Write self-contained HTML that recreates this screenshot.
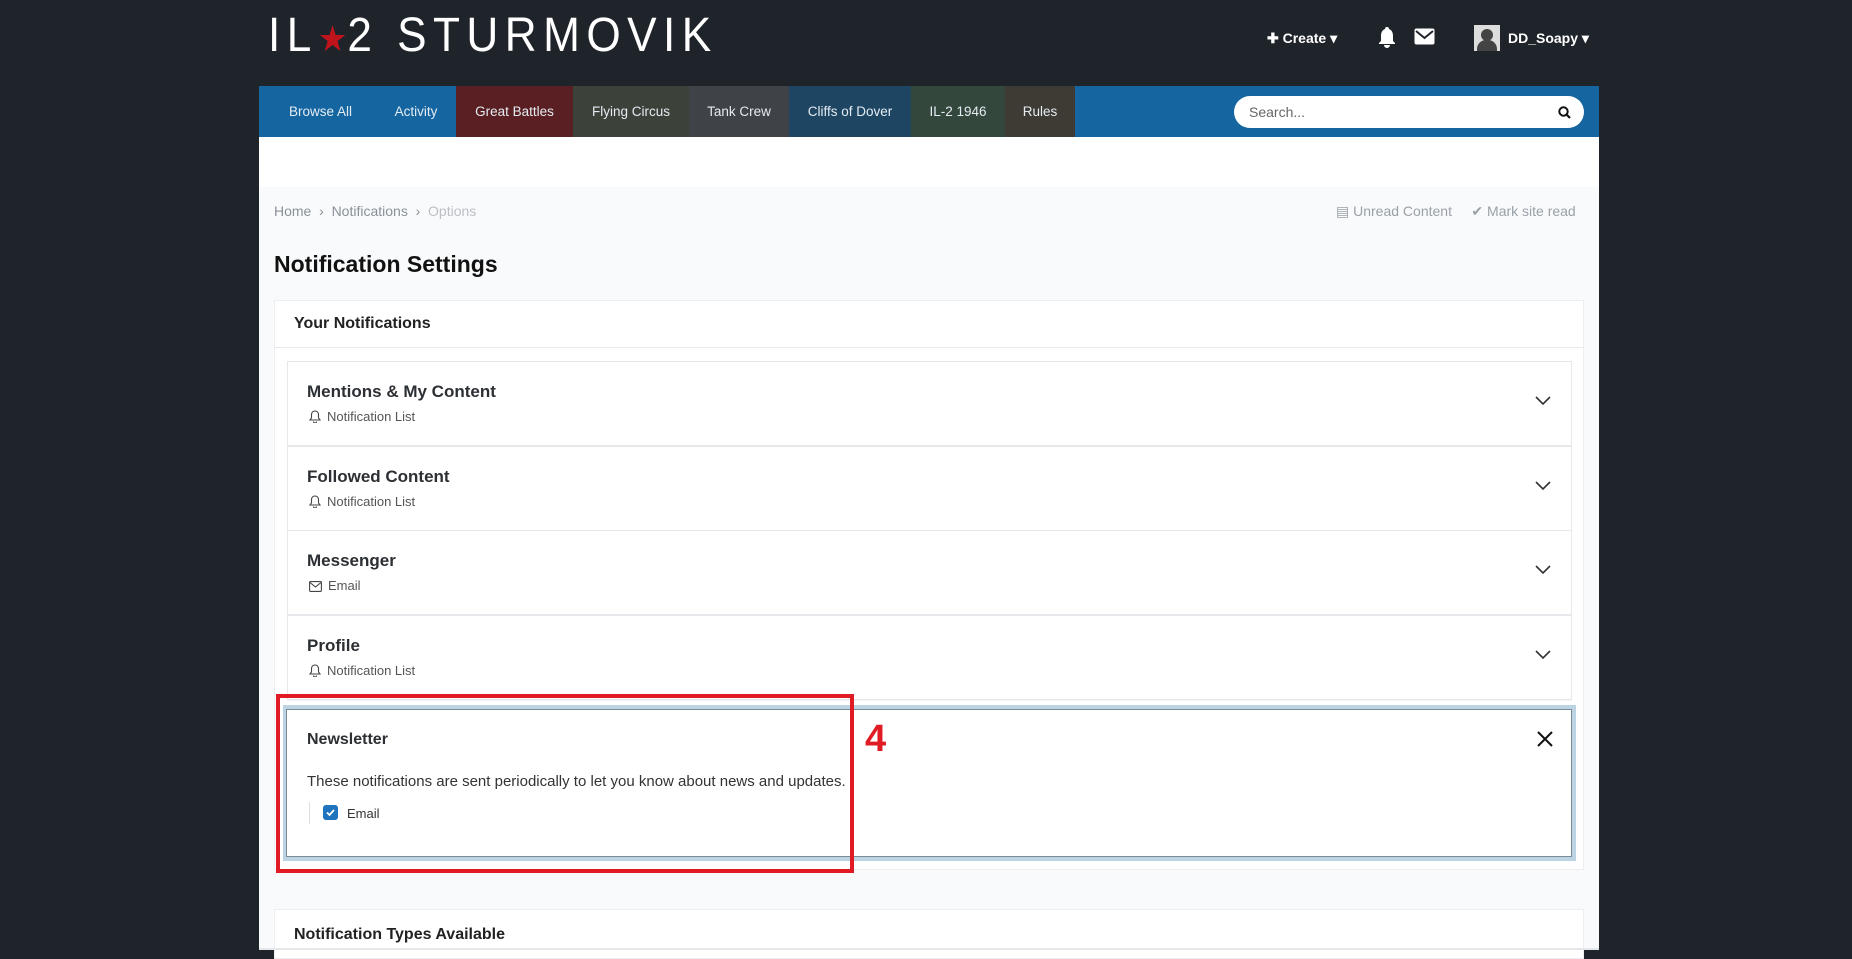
<!DOCTYPE html>
<html><head><meta charset="utf-8"><style>
*{box-sizing:border-box;margin:0;padding:0}
body{width:1852px;height:950px;overflow:hidden;background:#1f242b;font-family:"Liberation Sans",sans-serif;position:relative}
.abs{position:absolute}
.logo{left:268px;top:8px;color:#fff;font-size:48px;letter-spacing:7px;font-weight:normal;font-family:"Liberation Sans",sans-serif;transform:scaleX(0.92);transform-origin:left}
.hdr{color:#fff;font-weight:bold;font-size:14px;top:30px}
.nav{left:259px;top:86px;width:1340px;height:51px;background:#1565a0}
.nav div{position:absolute;top:0;height:51px;line-height:51px;color:#e4ecf3;font-size:13.5px;text-align:center}
.search{left:1234px;top:96px;width:350px;height:32px;background:#fff;border-radius:16px}
.main{left:259px;top:137px;width:1340px;height:813px;background:#f9fafb}
.white{left:259px;top:137px;width:1340px;height:50px;background:#fff}
.crumb{font-size:14px;color:#8a9099;top:203px}
.h1{left:274px;top:251px;font-size:23px;font-weight:bold;color:#111}
.box{background:#fff;border:1px solid #eceef1}
.row{position:absolute;left:287px;width:1285px;height:85px;background:#fff;border:1px solid #e6e8eb}
.row b{position:absolute;left:19px;top:20px;font-size:17px;color:#2c2f33}
.row span{position:absolute;left:21px;top:47px;font-size:13px;color:#555}
.row span svg{vertical-align:-2px;margin-right:6px}
.row svg.ch{position:absolute;right:20px;top:34px}
</style></head><body>
<div class="abs logo">IL<span style="color:#c0141c;font-size:36px;letter-spacing:0">★</span>2 STURMOVIK</div>
<div class="abs hdr" style="left:1267px">✚ Create ▾</div>
<svg class="abs" style="left:1378px;top:26px" width="18" height="22" viewBox="0 0 18 22"><path d="M9 1a2 2 0 0 1 2 2c3 1 4 4 4 7v5l2 2v1H1v-1l2-2v-5c0-3 1-6 4-7a2 2 0 0 1 2-2zM6 19h6a3 3 0 0 1-6 0z" fill="#fff"/></svg>
<svg class="abs" style="left:1414px;top:28px" width="21" height="17" viewBox="0 0 21 17"><rect x="0.5" y="0.5" width="20" height="16" rx="2" fill="#fff"/><path d="M2 3l8.5 7L19 3" stroke="#1f242b" stroke-width="2" fill="none"/></svg>
<div class="abs" style="left:1474px;top:25px;width:26px;height:26px;background:#ddd;overflow:hidden"><div style="position:absolute;left:7px;top:4px;width:12px;height:12px;border-radius:50%;background:#444"></div><div style="position:absolute;left:3px;top:15px;width:20px;height:13px;border-radius:9px 9px 0 0;background:#444"></div></div>
<div class="abs hdr" style="left:1508px">DD_Soapy ▾</div>
<div class="abs nav">
<div style="left:6px;width:111px">Browse All</div>
<div style="left:117px;width:80px">Activity</div>
<div style="left:197px;width:117px;background:#5a1f22">Great Battles</div>
<div style="left:314px;width:116px;background:#3c4139">Flying Circus</div>
<div style="left:430px;width:100px;background:#3f4246">Tank Crew</div>
<div style="left:530px;width:122px;background:#1e4562">Cliffs of Dover</div>
<div style="left:652px;width:94px;background:#34473c">IL-2 1946</div>
<div style="left:746px;width:70px;background:#3d3b34">Rules</div>
</div>
<div class="abs search"><span style="position:absolute;left:15px;top:8px;font-size:14px;color:#666">Search...</span>
<svg style="position:absolute;right:13px;top:10px" width="13" height="13" viewBox="0 0 13 13"><circle cx="5.5" cy="5.5" r="4.2" stroke="#111" stroke-width="2" fill="none"/><path d="M8.5 8.5l3.5 3.5" stroke="#111" stroke-width="2.2"/></svg></div>
<div class="abs main"></div>
<div class="abs white"></div>
<div class="abs crumb" style="left:274px">Home &nbsp;›&nbsp; Notifications &nbsp;›&nbsp; <span style="color:#bbc0c6">Options</span></div>
<div class="abs crumb" style="left:1336px;color:#9aa0a7">▤ Unread Content &nbsp;&nbsp;&nbsp; ✔ Mark site read</div>
<div class="abs h1">Notification Settings</div>
<div class="abs box" style="left:274px;top:300px;width:1310px;height:570px"></div>
<div class="abs" style="left:274px;top:347px;width:1310px;height:1px;background:#e8eaee"></div>
<div class="abs" style="left:294px;top:315px;font-size:16px;font-weight:bold;color:#222">Your Notifications</div>
<div class="abs" style="left:287px;top:361px;width:1285px;height:340px;background:#f3f5f7"></div>
<div class="row" style="top:361px"><b>Mentions &amp; My Content</b><span><svg width="12" height="13" viewBox="0 0 12 13"><path d="M6 1c2.5 0 3.5 2 3.5 4v3l1.5 2H1l1.5-2V5C2.5 3 3.5 1 6 1zM4.5 11.5a1.5 1.5 0 0 0 3 0" stroke="#444" stroke-width="1.1" fill="none"/></svg>Notification List</span><svg class="ch" width="16" height="10"><path d="M1 1l7 7 7-7" stroke="#333" stroke-width="1.6" fill="none"/></svg></div>
<div class="row" style="top:446px"><b>Followed Content</b><span><svg width="12" height="13" viewBox="0 0 12 13"><path d="M6 1c2.5 0 3.5 2 3.5 4v3l1.5 2H1l1.5-2V5C2.5 3 3.5 1 6 1zM4.5 11.5a1.5 1.5 0 0 0 3 0" stroke="#444" stroke-width="1.1" fill="none"/></svg>Notification List</span><svg class="ch" width="16" height="10"><path d="M1 1l7 7 7-7" stroke="#333" stroke-width="1.6" fill="none"/></svg></div>
<div class="row" style="top:530px"><b>Messenger</b><span><svg width="13" height="11" viewBox="0 0 13 11"><rect x="0.6" y="0.6" width="11.8" height="9.8" rx="1" stroke="#444" stroke-width="1.1" fill="none"/><path d="M1 1.5l5.5 4.5 5.5-4.5" stroke="#444" stroke-width="1.1" fill="none"/></svg>Email</span><svg class="ch" width="16" height="10"><path d="M1 1l7 7 7-7" stroke="#333" stroke-width="1.6" fill="none"/></svg></div>
<div class="row" style="top:615px"><b>Profile</b><span><svg width="12" height="13" viewBox="0 0 12 13"><path d="M6 1c2.5 0 3.5 2 3.5 4v3l1.5 2H1l1.5-2V5C2.5 3 3.5 1 6 1zM4.5 11.5a1.5 1.5 0 0 0 3 0" stroke="#444" stroke-width="1.1" fill="none"/></svg>Notification List</span><svg class="ch" width="16" height="10"><path d="M1 1l7 7 7-7" stroke="#333" stroke-width="1.6" fill="none"/></svg></div>
<div class="abs" style="left:283px;top:705px;width:1293px;height:156px;background:#bcd3e4"></div>
<div class="abs" style="left:286px;top:709px;width:1286px;height:148px;background:#fff;border:1px solid #7b8a99"></div>
<div class="abs" style="left:307px;top:731px;font-size:16px;font-weight:bold;color:#2c2f33">Newsletter</div>
<div class="abs" style="left:307px;top:773px;font-size:15px;color:#333">These notifications are sent periodically to let you know about news and updates.</div>
<div class="abs" style="left:309px;top:802px;width:1px;height:22px;background:#ddd"></div>
<div class="abs" style="left:323px;top:805px;width:15px;height:15px;border-radius:3px;background:#1f74bd"><svg width="15" height="15"><path d="M4 7.5l2.5 2.5 4.5-5" stroke="#fff" stroke-width="1.8" fill="none"/></svg></div>
<div class="abs" style="left:347px;top:806px;font-size:13px;color:#333">Email</div>
<svg class="abs" style="left:1537px;top:731px" width="16" height="16"><path d="M1 1l14 14M15 1L1 15" stroke="#111" stroke-width="2"/></svg>
<div class="abs" style="left:276px;top:694px;width:578px;height:179px;border:4px solid #e01b24"></div>
<div class="abs" style="left:865px;top:718px;font-size:38px;font-weight:bold;color:#e01b24">4</div>
<div class="abs box" style="left:274px;top:909px;width:1310px;height:50px"></div>
<div class="abs" style="left:294px;top:926px;font-size:16px;font-weight:bold;color:#222">Notification Types Available</div>
<div class="abs" style="left:259px;top:948px;width:1340px;height:2px;background:#e5e7ea"></div>
</body></html>
